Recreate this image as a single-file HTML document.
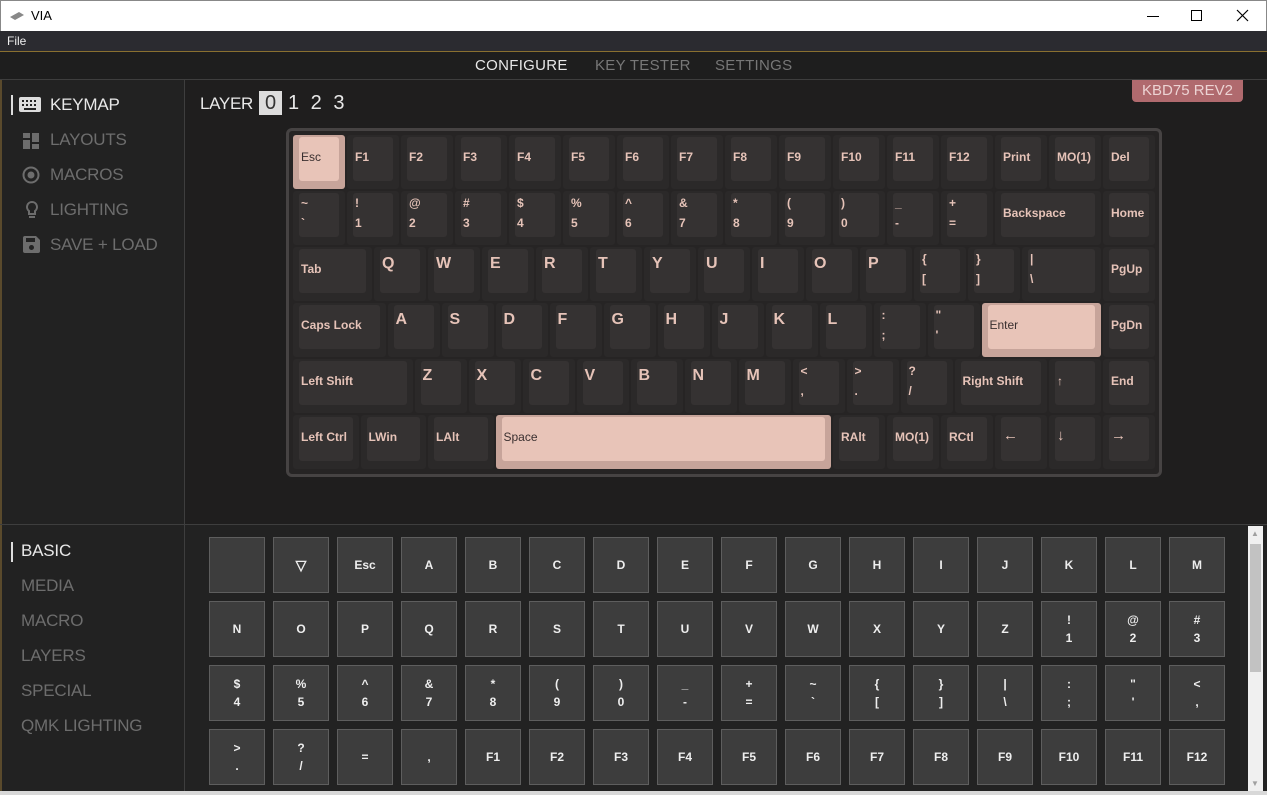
<!DOCTYPE html>
<html><head><meta charset="utf-8"><style>
*{box-sizing:border-box;margin:0;padding:0}
body{width:1267px;height:795px;overflow:hidden;background:#1f1e1e;font-family:"Liberation Sans",sans-serif;position:relative}
.abs{position:absolute}
#title{left:0;top:0;width:1267px;height:31px;background:#fff;border:1px solid #888;border-bottom:none}
#menu{left:0;top:31px;width:1267px;height:21px;background:#2b2b30;border-bottom:1px solid #8a7030;color:#eee;font-size:12px;padding:3px 7px}
#tabs{left:0;top:52px;width:1267px;height:28px;background:#1e1e1e;border-bottom:1px solid #3e3e3e}
.tab{position:absolute;top:5px;font-size:15px;color:#777;letter-spacing:0.3px}
#side{left:0;top:80px;width:185px;height:715px;background:#222222;border-right:1px solid #3e3e3e;border-left:2px solid #5a4a2c}
.si{position:absolute;left:48px;font-size:17px;color:#6d6d6d;letter-spacing:-0.2px}
.bi{position:absolute;left:21px;font-size:17px;color:#6d6d6d;letter-spacing:-0.2px}
#bottom{left:185px;top:524px;width:1082px;height:271px;border-top:1px solid #3e3e3e;background:#222}
#side2{left:0;top:524px;width:185px;height:271px;border-top:1px solid #3e3e3e}
#frame{left:286px;top:128px;width:876px;height:349px;border:3px solid #464343;border-radius:6px;background:#262424}
.k{position:absolute;height:54px;background:#2b2929;border-radius:3px}
.k::before{content:"";position:absolute;left:6px;right:6px;top:2px;bottom:8px;background:#353232;border-radius:3px}
.k span{position:absolute;left:8px;color:#e6c3b8;font-weight:bold;font-size:12px;white-space:nowrap;z-index:1}
.k .t{top:15px}
.k .L{top:8px;font-size:16px}
.k .d{top:2px;line-height:20px;font-size:12px}
.k.h{background:#c7a49a}
.k.h::before{background:#e8c4b8}
.k.h span{color:#3a3030;font-weight:normal}
.b{position:absolute;width:56px;height:56px;background:#3d3d3d;border:1px solid #5e5e5e;color:#eee;font-weight:bold;font-size:12px;display:flex;align-items:center;justify-content:center;text-align:center;line-height:18px}
</style></head><body>
<div id="title" class="abs">
 <svg class="abs" style="left:8px;top:10px" width="16" height="10"><path d="M1 6 L10 1 L15 4 L6 9Z" fill="#888"/></svg>
 <div class="abs" style="left:30px;top:7px;font-size:13px;color:#000">VIA</div>
 <div class="abs" style="left:1146px;top:15px;width:12px;height:1px;background:#000"></div>
 <div class="abs" style="left:1190px;top:9px;width:11px;height:11px;border:1px solid #000"></div>
 <svg class="abs" style="left:1235px;top:8px" width="13" height="13"><path d="M1 1L12 12M12 1L1 12" stroke="#000" stroke-width="1.2"/></svg>
</div>
<div id="menu" class="abs">File</div>
<div id="tabs" class="abs">
 <div class="tab" style="left:475px;color:#e8e8e8">CONFIGURE</div>
 <div class="tab" style="left:595px">KEY TESTER</div>
 <div class="tab" style="left:715px">SETTINGS</div>
</div>
<div id="side" class="abs">
 <div class="abs" style="left:9px;top:15px;width:2px;height:20px;background:#ddd"></div>
 <svg class="abs" style="left:17px;top:17px" width="22" height="15"><rect width="22" height="15" rx="2" fill="#ddd"/><g fill="#222"><rect x="3" y="3" width="2" height="2"/><rect x="7" y="3" width="2" height="2"/><rect x="11" y="3" width="2" height="2"/><rect x="15" y="3" width="2" height="2"/><rect x="3" y="7" width="2" height="2"/><rect x="7" y="7" width="2" height="2"/><rect x="11" y="7" width="2" height="2"/><rect x="15" y="7" width="2" height="2"/><rect x="5" y="11" width="12" height="2"/></g></svg>
 <div class="si" style="top:15px;color:#e8e8e8">KEYMAP</div>
 <svg class="abs" style="left:21px;top:53px" width="16" height="16" fill="#6d6d6d"><rect width="7" height="5"/><rect y="7" width="7" height="9"/><rect x="9" width="7" height="9"/><rect x="9" y="11" width="7" height="5"/></svg>
 <div class="si" style="top:50px">LAYOUTS</div>
 <svg class="abs" style="left:20px;top:86px" width="18" height="18"><circle cx="9" cy="9" r="7.5" fill="none" stroke="#6d6d6d" stroke-width="2"/><circle cx="9" cy="9" r="3.5" fill="#6d6d6d"/></svg>
 <div class="si" style="top:85px">MACROS</div>
 <svg class="abs" style="left:23px;top:120px" width="14" height="20"><path d="M7 2a5 5 0 0 0-3 9v3h6v-3a5 5 0 0 0-3-9z" fill="none" stroke="#6d6d6d" stroke-width="2"/><rect x="4" y="16" width="6" height="2" fill="#6d6d6d"/></svg>
 <div class="si" style="top:120px">LIGHTING</div>
 <svg class="abs" style="left:21px;top:156px" width="17" height="17"><path d="M0 2a2 2 0 0 1 2-2h11l4 4v11a2 2 0 0 1-2 2H2a2 2 0 0 1-2-2z" fill="#6d6d6d"/><rect x="3" y="2" width="9" height="4" fill="#222"/><circle cx="8.5" cy="11.5" r="2.5" fill="#222"/></svg>
 <div class="si" style="top:155px">SAVE + LOAD</div>
</div>
<div id="side2" class="abs">
 <div class="abs" style="left:11px;top:17px;width:2px;height:20px;background:#ddd"></div>
 <div class="bi" style="top:16px;color:#e8e8e8">BASIC</div>
 <div class="bi" style="top:51px">MEDIA</div>
 <div class="bi" style="top:86px">MACRO</div>
 <div class="bi" style="top:121px">LAYERS</div>
 <div class="bi" style="top:156px">SPECIAL</div>
 <div class="bi" style="top:191px">QMK LIGHTING</div>
</div>
<div class="abs" style="left:200px;top:94px;font-size:17px;color:#e8e8e8;letter-spacing:-0.3px">LAYER</div>
<div class="abs" style="left:259px;top:91px;width:23px;height:24px;background:#ddd;color:#333;font-size:20px;text-align:center;line-height:24px">0</div>
<div class="abs" style="left:288px;top:91px;font-size:20px;color:#e8e8e8;line-height:24px;word-spacing:6px">1 2 3</div>
<div class="abs" style="left:1132px;top:80px;width:111px;height:22px;background:#b06a6e;border-radius:0 0 4px 4px;color:#ecd3d3;font-size:15px;text-align:center;line-height:22px">KBD75 REV2</div>

<div id="frame" class="abs"></div>
<div class="abs" style="left:293px;top:135px">
<div class="k h" style="left:0;top:0;width:52px"><span class="t">Esc</span></div>
<div class="k" style="left:54px;top:0;width:52px"><span class="t">F1</span></div>
<div class="k" style="left:108px;top:0;width:52px"><span class="t">F2</span></div>
<div class="k" style="left:162px;top:0;width:52px"><span class="t">F3</span></div>
<div class="k" style="left:216px;top:0;width:52px"><span class="t">F4</span></div>
<div class="k" style="left:270px;top:0;width:52px"><span class="t">F5</span></div>
<div class="k" style="left:324px;top:0;width:52px"><span class="t">F6</span></div>
<div class="k" style="left:378px;top:0;width:52px"><span class="t">F7</span></div>
<div class="k" style="left:432px;top:0;width:52px"><span class="t">F8</span></div>
<div class="k" style="left:486px;top:0;width:52px"><span class="t">F9</span></div>
<div class="k" style="left:540px;top:0;width:52px"><span class="t">F10</span></div>
<div class="k" style="left:594px;top:0;width:52px"><span class="t">F11</span></div>
<div class="k" style="left:648px;top:0;width:52px"><span class="t">F12</span></div>
<div class="k" style="left:702px;top:0;width:52px"><span class="t">Print</span></div>
<div class="k" style="left:756px;top:0;width:52px"><span class="t">MO(1)</span></div>
<div class="k" style="left:810px;top:0;width:52px"><span class="t">Del</span></div>
<div class="k" style="left:0;top:56px;width:52px"><span class="d">~<br>`</span></div>
<div class="k" style="left:54px;top:56px;width:52px"><span class="d">!<br>1</span></div>
<div class="k" style="left:108px;top:56px;width:52px"><span class="d">@<br>2</span></div>
<div class="k" style="left:162px;top:56px;width:52px"><span class="d">#<br>3</span></div>
<div class="k" style="left:216px;top:56px;width:52px"><span class="d">$<br>4</span></div>
<div class="k" style="left:270px;top:56px;width:52px"><span class="d">%<br>5</span></div>
<div class="k" style="left:324px;top:56px;width:52px"><span class="d">^<br>6</span></div>
<div class="k" style="left:378px;top:56px;width:52px"><span class="d">&amp;<br>7</span></div>
<div class="k" style="left:432px;top:56px;width:52px"><span class="d">*<br>8</span></div>
<div class="k" style="left:486px;top:56px;width:52px"><span class="d">(<br>9</span></div>
<div class="k" style="left:540px;top:56px;width:52px"><span class="d">)<br>0</span></div>
<div class="k" style="left:594px;top:56px;width:52px"><span class="d">_<br>-</span></div>
<div class="k" style="left:648px;top:56px;width:52px"><span class="d">+<br>=</span></div>
<div class="k" style="left:702px;top:56px;width:106px"><span class="t">Backspace</span></div>
<div class="k" style="left:810px;top:56px;width:52px"><span class="t">Home</span></div>
<div class="k" style="left:0;top:112px;width:79px"><span class="t">Tab</span></div>
<div class="k" style="left:81px;top:112px;width:52px"><span class="L">Q</span></div>
<div class="k" style="left:135px;top:112px;width:52px"><span class="L">W</span></div>
<div class="k" style="left:189px;top:112px;width:52px"><span class="L">E</span></div>
<div class="k" style="left:243px;top:112px;width:52px"><span class="L">R</span></div>
<div class="k" style="left:297px;top:112px;width:52px"><span class="L">T</span></div>
<div class="k" style="left:351px;top:112px;width:52px"><span class="L">Y</span></div>
<div class="k" style="left:405px;top:112px;width:52px"><span class="L">U</span></div>
<div class="k" style="left:459px;top:112px;width:52px"><span class="L">I</span></div>
<div class="k" style="left:513px;top:112px;width:52px"><span class="L">O</span></div>
<div class="k" style="left:567px;top:112px;width:52px"><span class="L">P</span></div>
<div class="k" style="left:621px;top:112px;width:52px"><span class="d">{<br>[</span></div>
<div class="k" style="left:675px;top:112px;width:52px"><span class="d">}<br>]</span></div>
<div class="k" style="left:729px;top:112px;width:79px"><span class="d">|<br>\</span></div>
<div class="k" style="left:810px;top:112px;width:52px"><span class="t">PgUp</span></div>
<div class="k" style="left:0;top:168px;width:92.5px"><span class="t">Caps Lock</span></div>
<div class="k" style="left:94.5px;top:168px;width:52px"><span class="L">A</span></div>
<div class="k" style="left:148.5px;top:168px;width:52px"><span class="L">S</span></div>
<div class="k" style="left:202.5px;top:168px;width:52px"><span class="L">D</span></div>
<div class="k" style="left:256.5px;top:168px;width:52px"><span class="L">F</span></div>
<div class="k" style="left:310.5px;top:168px;width:52px"><span class="L">G</span></div>
<div class="k" style="left:364.5px;top:168px;width:52px"><span class="L">H</span></div>
<div class="k" style="left:418.5px;top:168px;width:52px"><span class="L">J</span></div>
<div class="k" style="left:472.5px;top:168px;width:52px"><span class="L">K</span></div>
<div class="k" style="left:526.5px;top:168px;width:52px"><span class="L">L</span></div>
<div class="k" style="left:580.5px;top:168px;width:52px"><span class="d">:<br>;</span></div>
<div class="k" style="left:634.5px;top:168px;width:52px"><span class="d">"<br>'</span></div>
<div class="k h" style="left:688.5px;top:168px;width:119.5px"><span class="t">Enter</span></div>
<div class="k" style="left:810px;top:168px;width:52px"><span class="t">PgDn</span></div>
<div class="k" style="left:0;top:224px;width:119.5px"><span class="t">Left Shift</span></div>
<div class="k" style="left:121.5px;top:224px;width:52px"><span class="L">Z</span></div>
<div class="k" style="left:175.5px;top:224px;width:52px"><span class="L">X</span></div>
<div class="k" style="left:229.5px;top:224px;width:52px"><span class="L">C</span></div>
<div class="k" style="left:283.5px;top:224px;width:52px"><span class="L">V</span></div>
<div class="k" style="left:337.5px;top:224px;width:52px"><span class="L">B</span></div>
<div class="k" style="left:391.5px;top:224px;width:52px"><span class="L">N</span></div>
<div class="k" style="left:445.5px;top:224px;width:52px"><span class="L">M</span></div>
<div class="k" style="left:499.5px;top:224px;width:52px"><span class="d">&lt;<br>,</span></div>
<div class="k" style="left:553.5px;top:224px;width:52px"><span class="d">&gt;<br>.</span></div>
<div class="k" style="left:607.5px;top:224px;width:52px"><span class="d">?<br>/</span></div>
<div class="k" style="left:661.5px;top:224px;width:92.5px"><span class="t">Right Shift</span></div>
<div class="k" style="left:756px;top:224px;width:52px"><span class="t">↑</span></div>
<div class="k" style="left:810px;top:224px;width:52px"><span class="t">End</span></div>
<div class="k" style="left:0;top:280px;width:65.5px"><span class="t">Left Ctrl</span></div>
<div class="k" style="left:67.5px;top:280px;width:65.5px"><span class="t">LWin</span></div>
<div class="k" style="left:135px;top:280px;width:65.5px"><span class="t">LAlt</span></div>
<div class="k h" style="left:202.5px;top:280px;width:335.5px"><span class="t">Space</span></div>
<div class="k" style="left:540px;top:280px;width:52px"><span class="t">RAlt</span></div>
<div class="k" style="left:594px;top:280px;width:52px"><span class="t">MO(1)</span></div>
<div class="k" style="left:648px;top:280px;width:52px"><span class="t">RCtl</span></div>
<div class="k" style="left:702px;top:280px;width:52px"><span class="t" style="font-weight:normal;font-size:15px;top:12px">←</span></div>
<div class="k" style="left:756px;top:280px;width:52px"><span class="t" style="font-weight:normal;font-size:15px;top:12px">↓</span></div>
<div class="k" style="left:810px;top:280px;width:52px"><span class="t" style="font-weight:normal;font-size:15px;top:12px">→</span></div>
</div>

<div id="bottom" class="abs"></div>
<div class="abs" style="left:1248px;top:526px;width:15px;height:266px;background:#f0f0f0"></div>
<div class="abs" style="left:1250px;top:544px;width:11px;height:128px;background:#c2c2c2"></div>
<div class="abs" style="left:1251px;top:529px;font-size:8px;color:#a0a0a0">▲</div>
<div class="abs" style="left:1251px;top:779px;font-size:8px;color:#a0a0a0">▼</div>
<div class="abs" style="left:209px;top:537px">
<div class="b" style="left:0;top:0"></div>
<div class="b" style="left:64px;top:0;font-size:14px">▽</div>
<div class="b" style="left:128px;top:0">Esc</div>
<div class="b" style="left:192px;top:0">A</div>
<div class="b" style="left:256px;top:0">B</div>
<div class="b" style="left:320px;top:0">C</div>
<div class="b" style="left:384px;top:0">D</div>
<div class="b" style="left:448px;top:0">E</div>
<div class="b" style="left:512px;top:0">F</div>
<div class="b" style="left:576px;top:0">G</div>
<div class="b" style="left:640px;top:0">H</div>
<div class="b" style="left:704px;top:0">I</div>
<div class="b" style="left:768px;top:0">J</div>
<div class="b" style="left:832px;top:0">K</div>
<div class="b" style="left:896px;top:0">L</div>
<div class="b" style="left:960px;top:0">M</div>
<div class="b" style="left:0;top:64px">N</div>
<div class="b" style="left:64px;top:64px">O</div>
<div class="b" style="left:128px;top:64px">P</div>
<div class="b" style="left:192px;top:64px">Q</div>
<div class="b" style="left:256px;top:64px">R</div>
<div class="b" style="left:320px;top:64px">S</div>
<div class="b" style="left:384px;top:64px">T</div>
<div class="b" style="left:448px;top:64px">U</div>
<div class="b" style="left:512px;top:64px">V</div>
<div class="b" style="left:576px;top:64px">W</div>
<div class="b" style="left:640px;top:64px">X</div>
<div class="b" style="left:704px;top:64px">Y</div>
<div class="b" style="left:768px;top:64px">Z</div>
<div class="b" style="left:832px;top:64px">!<br>1</div>
<div class="b" style="left:896px;top:64px">@<br>2</div>
<div class="b" style="left:960px;top:64px">#<br>3</div>
<div class="b" style="left:0;top:128px">$<br>4</div>
<div class="b" style="left:64px;top:128px">%<br>5</div>
<div class="b" style="left:128px;top:128px">^<br>6</div>
<div class="b" style="left:192px;top:128px">&amp;<br>7</div>
<div class="b" style="left:256px;top:128px">*<br>8</div>
<div class="b" style="left:320px;top:128px">(<br>9</div>
<div class="b" style="left:384px;top:128px">)<br>0</div>
<div class="b" style="left:448px;top:128px">_<br>-</div>
<div class="b" style="left:512px;top:128px">+<br>=</div>
<div class="b" style="left:576px;top:128px">~<br>`</div>
<div class="b" style="left:640px;top:128px">{<br>[</div>
<div class="b" style="left:704px;top:128px">}<br>]</div>
<div class="b" style="left:768px;top:128px">|<br>\</div>
<div class="b" style="left:832px;top:128px">:<br>;</div>
<div class="b" style="left:896px;top:128px">"<br>'</div>
<div class="b" style="left:960px;top:128px">&lt;<br>,</div>
<div class="b" style="left:0;top:192px">&gt;<br>.</div>
<div class="b" style="left:64px;top:192px">?<br>/</div>
<div class="b" style="left:128px;top:192px">=</div>
<div class="b" style="left:192px;top:192px">,</div>
<div class="b" style="left:256px;top:192px">F1</div>
<div class="b" style="left:320px;top:192px">F2</div>
<div class="b" style="left:384px;top:192px">F3</div>
<div class="b" style="left:448px;top:192px">F4</div>
<div class="b" style="left:512px;top:192px">F5</div>
<div class="b" style="left:576px;top:192px">F6</div>
<div class="b" style="left:640px;top:192px">F7</div>
<div class="b" style="left:704px;top:192px">F8</div>
<div class="b" style="left:768px;top:192px">F9</div>
<div class="b" style="left:832px;top:192px">F10</div>
<div class="b" style="left:896px;top:192px">F11</div>
<div class="b" style="left:960px;top:192px">F12</div>
</div>
<div class="abs" style="left:0;top:791px;width:1267px;height:4px;background:#d8d8d8"></div>
</body></html>
